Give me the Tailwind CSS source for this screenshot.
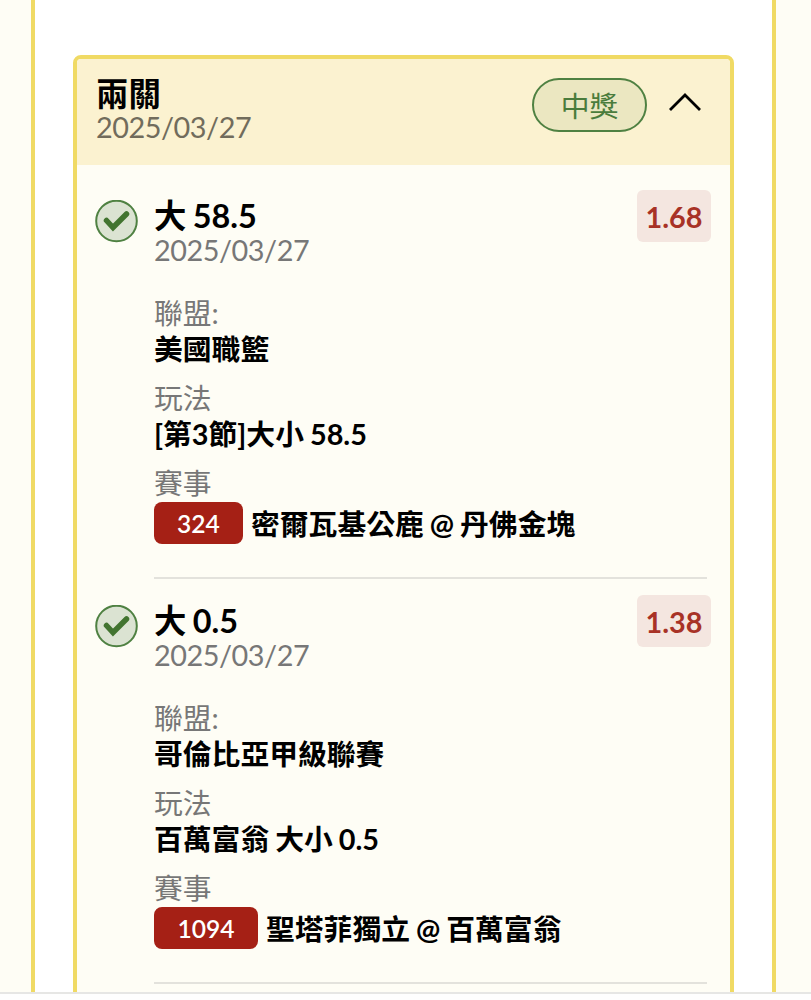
<!DOCTYPE html>
<html lang="zh-Hant">

<head>
  <meta charset="UTF-8" />
  <meta name="viewport" content="width=device-width, initial-scale=1.0" />
  <title>投注紀錄</title>
  <script src="https://cdn.jsdelivr.net/npm/@tailwindcss/browser@4"></script>
</head>

<body class="h-screen overflow-hidden bg-[#fefefe] font-['Lato','Noto_Sans_CJK_TC',sans-serif] text-[28.8px] text-black">
  <div class="h-[994px] overflow-hidden bg-[#fefdf5] border-b-2 border-[#e6e6e4]">
    <main class="ml-[31px] w-[745px] h-[1000px] bg-white border-x-4 border-[#f0da64] pt-[55px] px-[38px]">

      <!-- Bet card -->
      <section class="h-[1000px] border-4 border-[#f0da64] rounded-lg bg-[#fefdf5] overflow-hidden">
        <header class="h-[106px] bg-[#fbf2d0] flex items-start pl-[19px] pr-[27px] pt-[18px]">
          <div class="grow">
            <h1 class="h-[34px] leading-[34px] text-[32.4px] font-bold">兩關</h1>
            <p class="h-[34px] leading-[33px] text-[28.8px] tracking-[-0.45px] text-[#716c5c]">2025/03/27</p>
          </div>
          <span class="w-[115px] h-[54px] mt-px pt-[3px] rounded-full border-2 border-[#4f8142] bg-[#ebe7c1] text-[#4a7c3c] flex items-center justify-center">中獎</span>
          <svg class="w-9 h-6 ml-5 mt-3" viewBox="0 0 36 24" fill="none" stroke="#000" stroke-width="2.8">
            <path d="M3 21 18 6l15 15" />
          </svg>
        </header>

        <div class="pt-[25px] pl-[18px] pr-[19px]">
          <!-- Leg 1 -->
          <article class="flex items-start h-[405px]">
            <svg class="w-[43px] h-[43px] mt-[10px] shrink-0" viewBox="0 0 43 43" fill="none">
              <circle cx="21.5" cy="21" r="20.3" fill="#dbe3d2" stroke="#4f8142" stroke-width="2" />
              <path d="M11.5 20.5l6.5 7L31.500 14" stroke="#427430" stroke-width="5.500" stroke-linecap="round" />
            </svg>
            <div class="grow ml-4">
              <div class="flex">
                <div class="grow pt-[9px]">
                  <h2 class="h-[34px] leading-[34px] text-[32.4px] font-bold [word-spacing:-1.5px]">大 58.5</h2>
                  <p class="h-[34px] leading-[34px] tracking-[-0.45px] text-[#777]">2025/03/27</p>
                </div>
                <span class="w-[74px] h-[52px] pt-[3px] rounded-md bg-[#f4e6e0] text-[#a83226] font-bold flex items-center justify-center">1.68</span>
              </div>
              <dl class="mt-[29px] leading-[35px]">
                <dt class="h-[35px] text-[#777]">聯盟:</dt>
                <dd class="h-[35px] mb-[15px] leading-[36px] font-bold">美國職籃</dd>
                <dt class="h-[35px] text-[#777]">玩法</dt>
                <dd class="h-[35px] mb-[15px] leading-[36px] font-bold [word-spacing:-1px]">[第3節]大小 58.5</dd>
                <dt class="h-[35px] text-[#777]">賽事</dt>
                <dd class="mt-px flex items-center gap-2">
                  <span class="w-[89px] h-[42px] rounded-lg bg-[#a52015] text-white text-[24.6px] font-semibold flex items-center justify-center">324</span>
                  <span class="pt-[3px] font-bold [word-spacing:-1px]">密爾瓦基公鹿 @ 丹佛金塊</span>
                </dd>
              </dl>
              <hr class="mt-[33px] mr-1 border-t-2 border-[#e3e2dc]" />
            </div>
          </article>

          <!-- Leg 2 -->
          <article class="flex items-start h-[405px]">
            <svg class="w-[43px] h-[43px] mt-[10px] shrink-0" viewBox="0 0 43 43" fill="none">
              <circle cx="21.5" cy="21" r="20.3" fill="#dbe3d2" stroke="#4f8142" stroke-width="2" />
              <path d="M11.5 20.5l6.5 7L31.500 14" stroke="#427430" stroke-width="5.500" stroke-linecap="round" />
            </svg>
            <div class="grow ml-4">
              <div class="flex">
                <div class="grow pt-[9px]">
                  <h2 class="h-[34px] leading-[34px] text-[32.4px] font-bold [word-spacing:-1.5px]">大 0.5</h2>
                  <p class="h-[34px] leading-[34px] tracking-[-0.45px] text-[#777]">2025/03/27</p>
                </div>
                <span class="w-[74px] h-[52px] pt-[3px] rounded-md bg-[#f4e6e0] text-[#a83226] font-bold flex items-center justify-center">1.38</span>
              </div>
              <dl class="mt-[29px] leading-[35px]">
                <dt class="h-[35px] text-[#777]">聯盟:</dt>
                <dd class="h-[35px] mb-[15px] leading-[36px] font-bold">哥倫比亞甲級聯賽</dd>
                <dt class="h-[35px] text-[#777]">玩法</dt>
                <dd class="h-[35px] mb-[15px] leading-[36px] font-bold [word-spacing:-1px]">百萬富翁 大小 0.5</dd>
                <dt class="h-[35px] text-[#777]">賽事</dt>
                <dd class="mt-px flex items-center gap-2">
                  <span class="w-[104px] h-[42px] rounded-lg bg-[#a52015] text-white text-[24.6px] font-semibold flex items-center justify-center">1094</span>
                  <span class="pt-[3px] font-bold [word-spacing:-1px]">聖塔菲獨立 @ 百萬富翁</span>
                </dd>
              </dl>
              <hr class="mt-[33px] mr-1 border-t-2 border-[#e3e2dc]" />
            </div>
          </article>
        </div>
      </section>
    </main>
  </div>
</body>

</html>
